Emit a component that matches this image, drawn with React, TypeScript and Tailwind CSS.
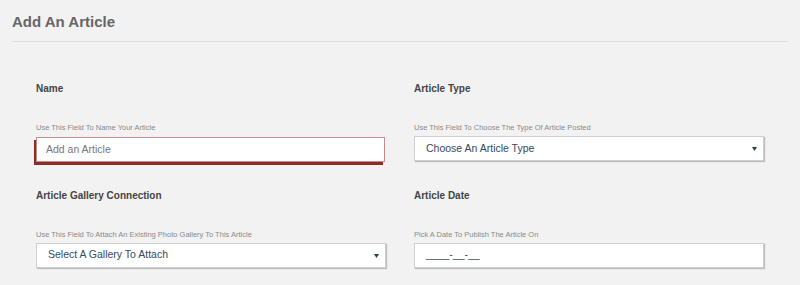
const fieldBase =
  "w-full h-[25px] bg-white px-[11px] text-[10.5px] text-[#34495e] outline-none"

function Caret() {
  return (
    <svg width="5" height="4" viewBox="0 0 5 4" className="absolute right-[7px] top-[11px]">
      <path d="M0 0 H5 L2.5 4 Z" fill="#2c3e50" />
    </svg>
  )
}

function Field({ label, help, children }: { label: string; help: string; children: React.ReactNode }) {
  return (
    <div className="flex flex-col">
      <div className="text-[10px] leading-[12px] font-bold text-[#444]">{label}</div>
      <div className="mt-[28px] text-[7.5px] leading-[10px] text-[#8a8a8a]">{help}</div>
      <div className="mt-[3px]">{children}</div>
    </div>
  )
}

export default function App() {
  return (
    <div className="w-[800px] h-[285px] bg-[#f2f2f2] font-['Liberation_Sans',Arial,sans-serif] overflow-hidden">
      <div className="mx-[12px] pt-[13px] pb-[10px] border-b border-[#dcdcdc]">
        <h1 className="text-[15px] leading-[18px] font-bold text-[#666]">Add An Article</h1>
      </div>

      <div className="grid grid-cols-2 gap-x-[28px] gap-y-[28px] pl-[36px] pr-[36px] pt-[41px]">
        <Field label="Name" help="Use This Field To Name Your Article">
          <div className="relative pr-[1px]">
            <input
              placeholder="Add an Article"
              className={`${fieldBase} pl-[9px] border border-[#c38e89] shadow-[-2px_3px_0_#8e2b22] placeholder:text-[#777]`}
            />
          </div>
        </Field>

        <Field label="Article Type" help="Use This Field To Choose The Type Of Article Posted">
          <div className="relative">
            <div className={`${fieldBase} flex items-center border border-[#cfcfcf] shadow-[1px_1px_1px_#bdbdbd]`}>
              Choose An Article Type
            </div>
            <Caret />
          </div>
        </Field>

        <Field label="Article Gallery Connection" help="Use This Field To Attach An Existing Photo Gallery To This Article">
          <div className="relative">
            <div className={`${fieldBase} flex items-center border border-[#cfcfcf] shadow-[1px_1px_1px_#bdbdbd]`}>
              Select A Gallery To Attach
            </div>
            <Caret />
          </div>
        </Field>

        <Field label="Article Date" help="Pick A Date To Publish The Article On">
          <div className={`${fieldBase} flex items-center border border-[#cfcfcf] shadow-[1px_1px_1px_#bdbdbd]`}>
            ____-__-__
          </div>
        </Field>
      </div>
    </div>
  )
}
